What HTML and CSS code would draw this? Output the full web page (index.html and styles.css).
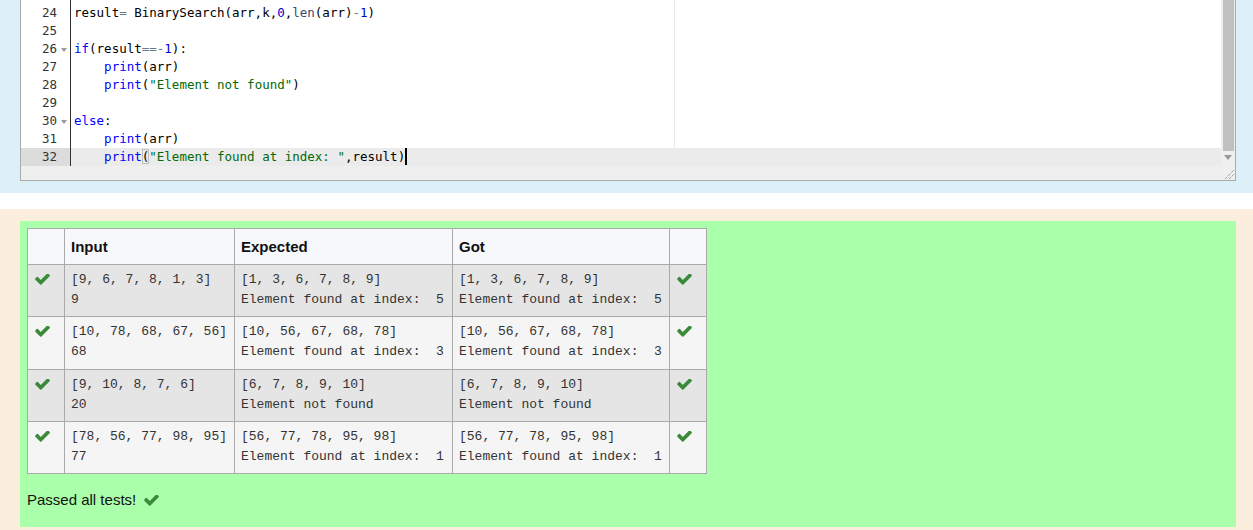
FILE: index.html
```html
<!DOCTYPE html>
<html>
<head>
<meta charset="utf-8">
<link rel="stylesheet" href="styles.css">
</head>
<body>
<div class="formulation">
  <div class="editor-wrap">
    <div class="editor">
      <div class="gutter">
        <div class="gl">24</div>
        <div class="gl">25</div>
        <div class="gl fold">26</div>
        <div class="gl">27</div>
        <div class="gl">28</div>
        <div class="gl">29</div>
        <div class="gl fold">30</div>
        <div class="gl">31</div>
        <div class="gl active">32</div>
      </div>
      <div class="code">
        <div class="print-margin"></div>
        <div class="ln">result<span class="op">=</span> BinarySearch(arr,k,<span class="num">0</span>,<span class="fn">len</span>(arr)<span class="op">-</span><span class="num">1</span>)</div>
        <div class="ln"> </div>
        <div class="ln"><span class="kw">if</span>(result<span class="op">==-</span><span class="num">1</span>):</div>
        <div class="ln">    <span class="kw">print</span>(arr)</div>
        <div class="ln">    <span class="kw">print</span>(<span class="str">"Element not found"</span>)</div>
        <div class="ln"> </div>
        <div class="ln"><span class="kw">else</span>:</div>
        <div class="ln">    <span class="kw">print</span>(arr)</div>
        <div class="ln active">    <span class="kw">print</span><span class="bracket">(</span><span class="str">"Element found at index: "</span>,result)<span class="cursor"></span></div>
      </div>
      <div class="vscroll">
        <div class="thumb"></div>
        <div class="arrow"></div>
      </div>
    </div>
    <div class="resize-strip">
      <svg class="grip" width="9" height="9" viewBox="0 0 9 9"><path d="M0 9 L9 0 M4 9 L9 4" stroke="#777" stroke-width="1" stroke-dasharray="1 1"/></svg>
    </div>
  </div>
</div>

<div class="outcome">
  <div class="results">
    <table class="tests">
      <colgroup>
        <col class="c-ok"><col class="c-in"><col class="c-exp"><col class="c-got"><col class="c-ok">
      </colgroup>
      <thead>
        <tr><th></th><th>Input</th><th>Expected</th><th>Got</th><th></th></tr>
      </thead>
      <tbody>
        <tr class="r0">
          <td class="ic"><svg class="check" viewBox="110 420 1570 1110"><path d="M1671 566q0 40-28 68l-724 724-136 136q-28 28-68 28t-68-28l-136-136-362-362q-28-28-28-68t28-68l136-136q28-28 68-28t68 28l294 295 656-657q28-28 68-28t68 28l136 136q28 28 28 68z"/></svg></td>
          <td><pre>[9, 6, 7, 8, 1, 3]
9</pre></td>
          <td><pre>[1, 3, 6, 7, 8, 9]
Element found at index:  5</pre></td>
          <td><pre>[1, 3, 6, 7, 8, 9]
Element found at index:  5</pre></td>
          <td class="ic"><svg class="check" viewBox="110 420 1570 1110"><path d="M1671 566q0 40-28 68l-724 724-136 136q-28 28-68 28t-68-28l-136-136-362-362q-28-28-28-68t28-68l136-136q28-28 68-28t68 28l294 295 656-657q28-28 68-28t68 28l136 136q28 28 28 68z"/></svg></td>
        </tr>
        <tr class="r1">
          <td class="ic"><svg class="check" viewBox="110 420 1570 1110"><path d="M1671 566q0 40-28 68l-724 724-136 136q-28 28-68 28t-68-28l-136-136-362-362q-28-28-28-68t28-68l136-136q28-28 68-28t68 28l294 295 656-657q28-28 68-28t68 28l136 136q28 28 28 68z"/></svg></td>
          <td><pre>[10, 78, 68, 67, 56]
68</pre></td>
          <td><pre>[10, 56, 67, 68, 78]
Element found at index:  3</pre></td>
          <td><pre>[10, 56, 67, 68, 78]
Element found at index:  3</pre></td>
          <td class="ic"><svg class="check" viewBox="110 420 1570 1110"><path d="M1671 566q0 40-28 68l-724 724-136 136q-28 28-68 28t-68-28l-136-136-362-362q-28-28-28-68t28-68l136-136q28-28 68-28t68 28l294 295 656-657q28-28 68-28t68 28l136 136q28 28 28 68z"/></svg></td>
        </tr>
        <tr class="r0">
          <td class="ic"><svg class="check" viewBox="110 420 1570 1110"><path d="M1671 566q0 40-28 68l-724 724-136 136q-28 28-68 28t-68-28l-136-136-362-362q-28-28-28-68t28-68l136-136q28-28 68-28t68 28l294 295 656-657q28-28 68-28t68 28l136 136q28 28 28 68z"/></svg></td>
          <td><pre>[9, 10, 8, 7, 6]
20</pre></td>
          <td><pre>[6, 7, 8, 9, 10]
Element not found</pre></td>
          <td><pre>[6, 7, 8, 9, 10]
Element not found</pre></td>
          <td class="ic"><svg class="check" viewBox="110 420 1570 1110"><path d="M1671 566q0 40-28 68l-724 724-136 136q-28 28-68 28t-68-28l-136-136-362-362q-28-28-28-68t28-68l136-136q28-28 68-28t68 28l294 295 656-657q28-28 68-28t68 28l136 136q28 28 28 68z"/></svg></td>
        </tr>
        <tr class="r1">
          <td class="ic"><svg class="check" viewBox="110 420 1570 1110"><path d="M1671 566q0 40-28 68l-724 724-136 136q-28 28-68 28t-68-28l-136-136-362-362q-28-28-28-68t28-68l136-136q28-28 68-28t68 28l294 295 656-657q28-28 68-28t68 28l136 136q28 28 28 68z"/></svg></td>
          <td><pre>[78, 56, 77, 98, 95]
77</pre></td>
          <td><pre>[56, 77, 78, 95, 98]
Element found at index:  1</pre></td>
          <td><pre>[56, 77, 78, 95, 98]
Element found at index:  1</pre></td>
          <td class="ic"><svg class="check" viewBox="110 420 1570 1110"><path d="M1671 566q0 40-28 68l-724 724-136 136q-28 28-68 28t-68-28l-136-136-362-362q-28-28-28-68t28-68l136-136q28-28 68-28t68 28l294 295 656-657q28-28 68-28t68 28l136 136q28 28 28 68z"/></svg></td>
        </tr>
      </tbody>
    </table>
    <div class="passed">Passed all tests! <svg class="check" viewBox="110 420 1570 1110"><path d="M1671 566q0 40-28 68l-724 724-136 136q-28 28-68 28t-68-28l-136-136-362-362q-28-28-28-68t28-68l136-136q28-28 68-28t68 28l294 295 656-657q28-28 68-28t68 28l136 136q28 28 28 68z"/></svg></div>
  </div>
</div>
</body>
</html>
```

FILE: styles.css
```css
html, body {
  margin: 0;
  padding: 0;
  background: #ffffff;
  font-family: "Liberation Sans", Arial, sans-serif;
  overflow: hidden;
}

.formulation {
  background: #def0f7;
  padding: 0 17px 12px 20px;
}

.editor-wrap {
  border: 1px solid #aaaaaa;
  border-top: none;
  background: #efefef;
  position: relative;
}

.editor {
  display: flex;
  height: 166px;
  padding-top: 4px;
  box-sizing: border-box;
  background: #ffffff;
}

.gutter {
  width: 49px;
  border-right: 1px solid #333333;
  background: #ffffff;
  font-family: "DejaVu Sans Mono", monospace;
  font-size: 12.5px;
  color: #333333;
  margin-top: -4px;
  padding-top: 4px;
}

.gl {
  height: 18px;
  line-height: 18px;
  text-align: right;
  padding-right: 13px;
  position: relative;
}

.gl.active {
  background: #dcdcdc;
}

.gl.fold::after {
  content: "";
  position: absolute;
  right: 3px;
  top: 8px;
  border-left: 3px solid transparent;
  border-right: 3px solid transparent;
  border-top: 4px solid #999999;
}

.code {
  flex: 1;
  position: relative;
  font-family: "DejaVu Sans Mono", monospace;
  font-size: 12.5px;
  color: #000000;
}

.print-margin {
  position: absolute;
  left: 603px;
  top: -4px;
  bottom: 0;
  width: 1px;
  background: #e8e8e8;
}

.ln {
  height: 18px;
  line-height: 18px;
  white-space: pre;
  padding-left: 3px;
  position: relative;
}

.ln.active {
  background: #ebebeb;
}

.kw { color: #0000ff; }
.num { color: #0000cd; }
.str { color: #036a07; }
.op { color: #687687; }
.fn { color: #3c4c72; }

.bracket {
  outline: 1px solid #c0c0c0;
  outline-offset: -1px;
}

.cursor {
  display: inline-block;
  width: 2px;
  height: 17px;
  background: #000000;
  vertical-align: top;
}

.vscroll {
  width: 14px;
  background: #efefef;
  position: relative;
  margin-top: -4px;
}

.thumb {
  margin-left: 2px;
  width: 11px;
  height: 151px;
  background: #c0c0c0;
}

.arrow {
  margin: 4px 0 0 3px;
  width: 0;
  height: 0;
  border-left: 4px solid transparent;
  border-right: 4px solid transparent;
  border-top: 5px solid #999999;
}

.resize-strip {
  height: 14px;
  position: relative;
}

.grip {
  position: absolute;
  right: 1px;
  bottom: 1px;
}

.outcome {
  margin-top: 16px;
  background: #fbeedc;
  padding: 12px 17px 3px 20px;
}

.results {
  background: #aaffaa;
  padding: 7px 7px 9px 7px;
  min-height: 306px;
  box-sizing: border-box;
}

.tests {
  border-collapse: collapse;
  table-layout: fixed;
  width: 680px;
  color: #333333;
}

.c-ok { width: 37px; }
.c-in { width: 170px; }
.c-exp { width: 218px; }
.c-got { width: 217px; }

.tests th {
  background: #f7f8fc;
  border: 1px solid #aaaaaa;
  text-align: left;
  font-weight: bold;
  font-size: 15px;
  color: #111111;
  height: 36px;
  padding: 0 6px;
  box-sizing: border-box;
}

.tests td {
  border: 1px solid #aaaaaa;
  vertical-align: top;
  padding: 5px 6px 6px 6px;
  height: 52.25px;
  box-sizing: border-box;
}

.tests tr.r0 td { background: #e5e5e5; }
.tests tr.r1 td { background: #f5f5f5; }

.tests pre {
  margin: 0;
  font-family: "Liberation Mono", "Courier New", monospace;
  font-size: 13px;
  line-height: 20px;
  color: #333333;
  white-space: pre;
}

.tests td.ic {
  padding: 9px 0 0 7px;
}

.tests td.ic .check {
  display: block;
}

.check {
  width: 15px;
  height: 11px;
  fill: #3a8a3a;
  display: inline-block;
}

.passed {
  margin-top: 16px;
  font-size: 15px;
  line-height: 20px;
  color: #111111;
  display: flex;
  align-items: center;
  white-space: pre;
}

.passed .check {
  margin-left: 4px;
}
```
